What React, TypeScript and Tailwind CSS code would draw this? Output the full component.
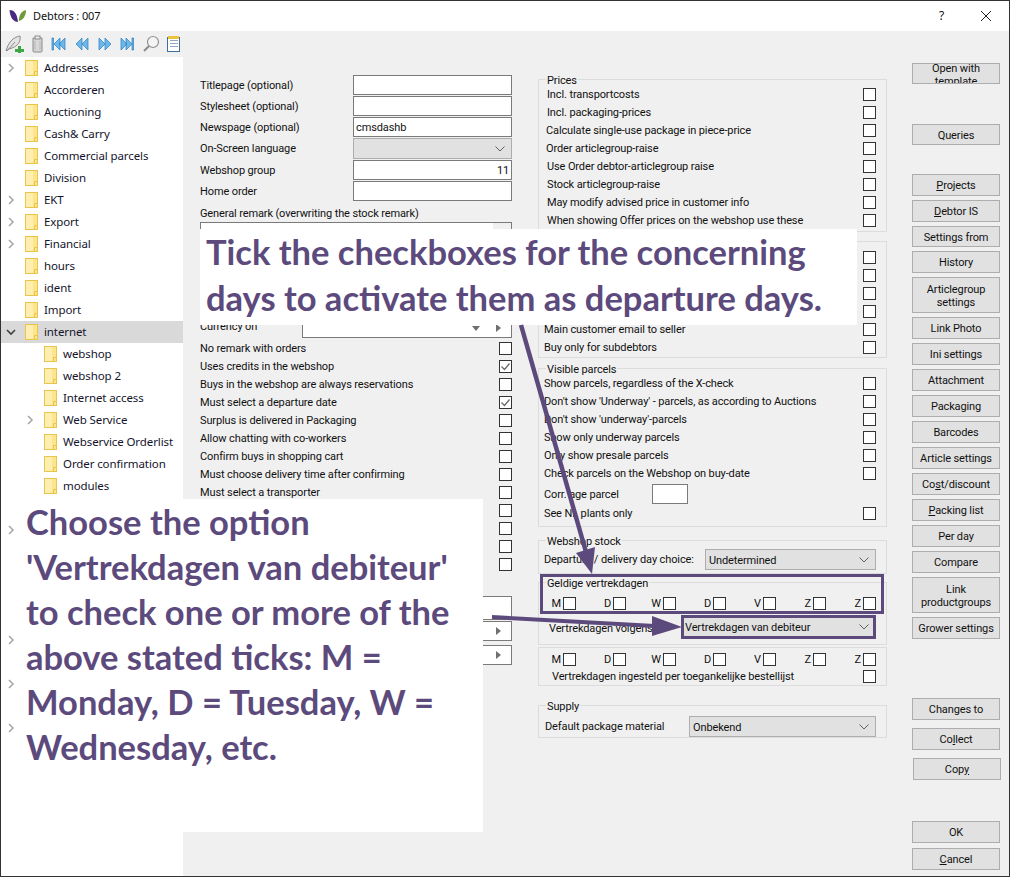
import type { ReactNode } from "react";

const UI = "font-['Roboto',sans-serif] text-[11px] leading-[18px] tracking-[-0.12px] text-[#111]";

const tree = [
  { name: "Addresses", more: true },
  { name: "Accorderen" },
  { name: "Auctioning" },
  { name: "Cash& Carry" },
  { name: "Commercial parcels" },
  { name: "Division" },
  { name: "EKT", more: true },
  { name: "Export", more: true },
  { name: "Financial", more: true },
  { name: "hours" },
  { name: "ident" },
  { name: "Import" },
  { name: "internet", open: true },
  { name: "webshop", child: true },
  { name: "webshop 2", child: true },
  { name: "Internet access", child: true },
  { name: "Web Service", child: true, more: true },
  { name: "Webservice Orderlist", child: true },
  { name: "Order confirmation", child: true },
  { name: "modules", child: true },
];

function Folder() {
  return (
    <svg width="13" height="16" viewBox="0 0 13 16" className="shrink-0">
      <rect x="0.5" y="0.5" width="12" height="15" fill="#fde58e" stroke="#eac54c" />
      <rect x="1" y="1" width="7" height="14" fill="#feeeb0" />
      <path d="M9.5 15.5v-4h3" fill="none" stroke="#eac54c" />
    </svg>
  );
}

function Chevron({ open }: { open?: boolean }) {
  if (open) {
    return (
      <svg width="10" height="10" viewBox="0 0 10 10">
        <path d="M1 3l4 4 4-4" fill="none" stroke="#404040" strokeWidth="1.6" />
      </svg>
    );
  }
  return (
    <svg width="10" height="10" viewBox="0 0 10 10">
      <path d="M3 1l4 4-4 4" fill="none" stroke="#a8a8a8" strokeWidth="1.6" />
    </svg>
  );
}

function Tree() {
  const extra = [1, 2, 3, 4, 5, 6, 7, 8, 9, 10, 11];
  return (
    <div className="w-[182px] bg-white shrink-0 overflow-hidden font-['Noto_Sans',sans-serif] text-[11.5px] tracking-[-0.1px] text-[#14142b]">
      {tree.map((t) => (
        <div key={t.name} className={`h-[22px] flex items-center ${t.open ? "bg-[#d9d9d9]" : ""} ${t.child ? "pl-[24px]" : "pl-[5px]"}`}>
          <div className="w-[19px] shrink-0">{(t.more || t.open) && <Chevron open={t.open} />}</div>
          <Folder />
          <span className="ml-[6px] whitespace-nowrap">{t.name}</span>
        </div>
      ))}
      {extra.map((i) => (
        <div key={i} className="h-[22px] flex items-center pl-[5px]">
          {(i === 2 || i === 7 || i === 9 || i === 11) && <Chevron />}
        </div>
      ))}
    </div>
  );
}

function Box({ checked }: { checked?: boolean }) {
  return (
    <span className="block w-[13px] h-[13px] border border-[#333] bg-white shrink-0">
      {checked && (
        <svg width="11" height="11" viewBox="0 0 11 11" className="block">
          <path d="M1.5 5.5l3 3 5-6" fill="none" stroke="#666" strokeWidth="1.2" />
        </svg>
      )}
    </span>
  );
}

function Field({ label, value, right }: { label: string; value?: string; right?: boolean }) {
  return (
    <div className="flex justify-between h-[21px]">
      <span className="leading-[22px]">{label}</span>
      <input
        readOnly
        value={value ?? ""}
        className={`w-[159px] h-[20px] border border-[#7a7a7a] bg-white px-[2px] text-[11px] outline-none ${right ? "text-right" : ""}`}
      />
    </div>
  );
}

function Select({ value, className }: { value?: string; className: string }) {
  return (
    <div className={`flex items-center justify-between border border-[#adadad] bg-[#e1e1e1] pl-[3px] pr-[5px] ${className}`}>
      <span className="whitespace-nowrap pt-[2px]">{value}</span>
      <svg width="12" height="8" viewBox="0 0 12 8">
        <path d="M1.5 1.5l4.5 4.5 4.5-4.5" fill="none" stroke="#606060" strokeWidth="1" />
      </svg>
    </div>
  );
}

function LeftRow({ label, checked }: { label?: string; checked?: boolean }) {
  return (
    <div className="h-[18px] flex items-start justify-between">
      <span className="mt-px">{label}</span>
      <span className="mt-[3px]">
        <Box checked={checked} />
      </span>
    </div>
  );
}

function Row({ label, pl = "pl-[5px]" }: { label?: string; pl?: string }) {
  return (
    <div className={`h-[18px] flex items-start justify-between pr-[10px] ${pl}`}>
      <span className="whitespace-nowrap mt-px">{label}</span>
      <span className="mt-[3px]">
        <Box />
      </span>
    </div>
  );
}

function Group({ legend, className, children }: { legend?: string; className: string; children: ReactNode }) {
  return (
    <div className={`relative border border-[#dcdcdc] ${className}`}>
      {legend && <span className="absolute left-[7px] -top-[8px] bg-[#f0f0f0] px-[1px] whitespace-nowrap">{legend}</span>}
      {children}
    </div>
  );
}

function Days() {
  return (
    <div className="flex justify-end pr-[10px] h-[18px]">
      {["M", "D", "W", "D", "V", "Z", "Z"].map((d, i) => (
        <div key={i} className={`flex justify-end gap-[2px] ${i === 0 ? "w-[37px]" : "w-[50px]"}`}>
          <span className="mt-px">{d}</span>
          <span className="mt-[3px]">
            <Box />
          </span>
        </div>
      ))}
    </div>
  );
}

function Btn({ children, className }: { children: ReactNode; className: string }) {
  return (
    <div className={`w-[88px] border border-[#adadad] bg-[#e1e1e1] flex items-center justify-center text-center leading-[13px] pt-px overflow-hidden shrink-0 ${className}`}>
      <span>{children}</span>
    </div>
  );
}

function Toolbar() {
  const nav = "#6cb8ea";
  return (
    <div className="h-[26px] bg-[#f0f0f0] flex items-center pl-[4px]">
      <svg width="180" height="18" viewBox="0 0 180 18" className="block">
        {/* feather */}
        <path d="M1 16C3 8 8 2 15 1c1 5-2 10-8 12l-3 1z" fill="#e4e4e4" stroke="#8c8c8c" />
        <path d="M2 16l8-9" stroke="#8c8c8c" fill="none" />
        <path d="M13 11h3v3h3v3h-3v1h-3v-1h-3v-3h3z" fill="#3fa648" />
        {/* trash */}
        <path d="M28 3h9v13a1 1 0 0 1-1 1h-7a1 1 0 0 1-1-1z" fill="#d8d8d8" stroke="#8a8a8a" />
        <rect x="30" y="1" width="5" height="3" fill="#ececec" stroke="#8a8a8a" />
        <path d="M30 6v9M35 6v9" stroke="#b5b5b5" />
        {/* first */}
        <path d="M47 3h1.500v12h-1.500zM55 3v12l-6-6zM60 3v12l-6-6z" fill={nav} stroke="#2b7dbb" strokeWidth="0.7" />
        {/* prev */}
        <path d="M77 3v12l-6-6zM83 3v12l-6-6z" fill={nav} stroke="#2b7dbb" strokeWidth="0.7" />
        {/* next */}
        <path d="M94 3v12l6-6zM100 3v12l6-6z" fill={nav} stroke="#2b7dbb" strokeWidth="0.7" />
        {/* last */}
        <path d="M116 3v12l6-6zM121 3v12l6-6zM127 3h1.500v12h-1.500z" fill={nav} stroke="#2b7dbb" strokeWidth="0.7" />
        {/* magnifier */}
        <circle cx="148" cy="7" r="5.500" fill="#f4f4f4" stroke="#909090" strokeWidth="1.2" />
        <path d="M144 11l-5 5" stroke="#8a8a8a" strokeWidth="2" />
        {/* notepad */}
        <rect x="162.500" y="2.500" width="12" height="14" fill="#fff" stroke="#3d6e9e" />
        <path d="M163 1h11v3h-11z" fill="#eec23b" />
        <path d="M165 5.500h8M165 8.500h8M165 11.500h8" stroke="#8fa8c0" />
      </svg>
    </div>
  );
}

export default function App() {
  return (
    <div className={`relative w-[1010px] h-[877px] border border-[#333] bg-[#f0f0f0] overflow-hidden flex flex-col ${UI}`}>
      {/* title bar */}
      <div className="h-[30px] bg-white flex items-center shrink-0">
        <svg width="18" height="14" viewBox="0 0 18 14" className="ml-[8px]">
          <path d="M0.500 1C5 1 8 4 9 13 4 13 1 8 0.500 1z" fill="#4a2a80" />
          <path d="M17 1C13 2 10 5 9.800 12 14 11 17 7 17 1z" fill="#6e9a3c" />
        </svg>
        <span className="ml-[6px] font-['Noto_Sans',sans-serif] text-[11px]">Debtors : 007</span>
        <span className="ml-auto mr-[36px] font-['Noto_Sans',sans-serif] text-[12px]">?</span>
        <svg width="12" height="12" viewBox="0 0 12 12" className="mr-[17px]">
          <path d="M1 1l10 10M11 1L1 11" stroke="#222" strokeWidth="1" />
        </svg>
      </div>
      <Toolbar />

      <div className="flex flex-1 min-h-0">
        <Tree />

        {/* left form */}
        <div className="w-[312px] ml-[17px] pt-[18px] shrink-0">
          <Field label="Titlepage (optional)" />
          <Field label="Stylesheet (optional)" />
          <Field label="Newspage (optional)" value="cmsdashb" />
          <div className="h-[22px] flex justify-between">
            <span className="leading-[22px]">On-Screen language</span>
            <Select className="w-[159px] h-[21px] bg-[#dcdcdc]" />
          </div>
          <Field label="Webshop group" value="11" right />
          <Field label="Home order" />
          <div className="h-[20px] leading-[24px]">General remark (overwriting the stock remark)</div>
          <div className="h-[90px] border border-[#7a7a7a] bg-white flex justify-end">
            <div className="w-[18px] bg-[#f0f0f0]" />
          </div>
          <div className="mt-[6px] h-[21px] flex justify-between">
            <span className="leading-[18px]">Currency on</span>
            <div className="w-[210px] h-[20px] border border-[#7a7a7a] bg-white flex items-center justify-end gap-[16px] pr-[10px]">
              <span className="w-0 h-0 border-x-[4px] border-x-transparent border-t-[5px] border-t-[#707070]" />
              <span className="w-0 h-0 border-y-[4px] border-y-transparent border-l-[5px] border-l-[#707070]" />
            </div>
          </div>
          <LeftRow label="No remark with orders" />
          <LeftRow label="Uses credits in the webshop" checked />
          <LeftRow label="Buys in the webshop are always reservations" />
          <LeftRow label="Must select a departure date" checked />
          <LeftRow label="Surplus is delivered in Packaging" />
          <LeftRow label="Allow chatting with co-workers" />
          <LeftRow label="Confirm buys in shopping cart" />
          <LeftRow label="Must choose delivery time after confirming" />
          <LeftRow label="Must select a transporter" />
          <LeftRow />
          <LeftRow />
          <LeftRow />
          <LeftRow />
          <div className="mt-[23px] ml-auto w-[210px] h-[24px] border border-[#7a7a7a] bg-white" />
          <div className="mt-[1px] ml-auto w-[210px] h-[20px] border border-[#7a7a7a] bg-white flex items-center justify-end pr-[10px]">
            <span className="w-0 h-0 border-y-[4px] border-y-transparent border-l-[5px] border-l-[#707070]" />
          </div>
          <div className="mt-[4px] ml-auto w-[210px] h-[20px] border border-[#7a7a7a] bg-white flex items-center justify-end pr-[10px]">
            <span className="w-0 h-0 border-y-[4px] border-y-transparent border-l-[5px] border-l-[#707070]" />
          </div>
        </div>

        {/* option groups */}
        <div className="w-[349px] ml-[26px] pt-[22px] shrink-0">
          <Group legend="Prices" className="h-[153px] pt-[5px]">
            <Row label="Incl. transportcosts" pl="pl-[8px]" />
            <Row label="Incl. packaging-prices" pl="pl-[8px]" />
            <Row label="Calculate single-use package in piece-price" pl="pl-[7px]" />
            <Row label="Order articlegroup-raise" pl="pl-[7px]" />
            <Row label="Use Order debtor-articlegroup raise" pl="pl-[8px]" />
            <Row label="Stock articlegroup-raise" pl="pl-[8px]" />
            <Row label="May modify advised price in customer info" pl="pl-[8px]" />
            <Row label="When showing Offer prices on the webshop use these" pl="pl-[8px]" />
          </Group>
          <Group className="mt-[9px] h-[117px] pt-[6px]">
            <Row />
            <Row />
            <Row />
            <Row />
            <Row label="Main customer email to seller" />
            <Row label="Buy only for subdebtors" />
          </Group>
          <Group legend="Visible parcels" className="mt-[10px] h-[159px] pt-[5px]">
            <Row label="Show parcels, regardless of the X-check" />
            <Row label="Don't show 'Underway' - parcels, as according to Auctions" />
            <Row label="Don't show 'underway'-parcels" />
            <Row label="Show only underway parcels" />
            <Row label="Only show presale parcels" />
            <Row label="Check parcels on the Webshop on buy-date" />
            <div className="h-[22px] flex pl-[5px] leading-[26px]">
              <span className="w-[108px] whitespace-nowrap">Corr. age parcel</span>
              <div className="mt-[2px] w-[36px] h-[20px] border border-[#7a7a7a] bg-white" />
            </div>
            <Row label="See NL plants only" />
          </Group>
          <Group legend="Webshop stock" className="mt-[13px] h-[34px] pt-[8px] pl-[5px] pr-[10px]">
            <div className="flex justify-between">
              <span className="leading-[22px] whitespace-nowrap">Departure / delivery day choice:</span>
              <Select value="Undetermined" className="w-[171px] h-[21px]" />
            </div>
          </Group>
          <Group legend="Geldige vertrekdagen" className="mt-[8px] h-[63px] pt-[11px]">
            <Days />
            <div className="mt-[3px] flex justify-between pl-[10px] pr-[10px]">
              <span className="leading-[27px] whitespace-nowrap">Vertrekdagen volgens</span>
              <Select value="Vertrekdagen van debiteur" className="w-[195px] h-[23px]" />
            </div>
          </Group>
          <Group className="mt-[2px] h-[39px] pt-[2px]">
            <Days />
            <div className="-mt-[1px]">
              <Row label="Vertrekdagen ingesteld per toegankelijke bestellijst" pl="pl-[13px]" />
            </div>
          </Group>
          <Group legend="Supply" className="mt-[19px] h-[33px] pt-[10px] pl-[6px] pr-[10px]">
            <div className="flex justify-between">
              <span className="leading-[22px] whitespace-nowrap">Default package material</span>
              <Select value="Onbekend" className="w-[187px] h-[21px]" />
            </div>
          </Group>
        </div>

        {/* buttons */}
        <div className="w-[90px] ml-[25px] flex flex-col shrink-0">
          <Btn className="mt-[6px] h-[21px]"><span className="block mt-[2px]">Open with<br />template</span></Btn>
          <Btn className="mt-[40px] h-[21px]">Queries</Btn>
          <Btn className="mt-[29px] h-[22px]"><u>P</u>rojects</Btn>
          <Btn className="mt-[4px] h-[22px]"><u>D</u>ebtor IS</Btn>
          <Btn className="mt-[4px] h-[21px]">Settings from</Btn>
          <Btn className="mt-[4px] h-[22px]">History</Btn>
          <Btn className="mt-[4px] h-[36px]">Articlegroup<br />settings</Btn>
          <Btn className="mt-[4px] h-[22px]">Link Photo</Btn>
          <Btn className="mt-[4px] h-[22px]">Ini settings</Btn>
          <Btn className="mt-[4px] h-[22px]">Attachment</Btn>
          <Btn className="mt-[4px] h-[22px]">Packaging</Btn>
          <Btn className="mt-[4px] h-[22px]">Barcodes</Btn>
          <Btn className="mt-[4px] h-[22px]">Article settings</Btn>
          <Btn className="mt-[4px] h-[22px]">Co<u>s</u>t/discount</Btn>
          <Btn className="mt-[4px] h-[22px]"><u>P</u>acking list</Btn>
          <Btn className="mt-[4px] h-[22px]">Per day</Btn>
          <Btn className="mt-[4px] h-[22px]">Compare</Btn>
          <Btn className="mt-[4px] h-[36px]">Link<br />productgroups</Btn>
          <Btn className="mt-[4px] h-[22px]">Grower settings</Btn>
          <Btn className="mt-[59px] h-[22px]">Changes to</Btn>
          <Btn className="mt-[8px] h-[22px]">Co<u>l</u>lect</Btn>
          <Btn className="mt-[8px] h-[22px] ml-[1px]">Cop<u>y</u></Btn>
          <Btn className="mt-[41px] h-[22px]">OK</Btn>
          <Btn className="mt-[5px] h-[22px]"><u>C</u>ancel</Btn>
        </div>
      </div>

      {/* annotations laid over the dialog */}
      <div className="absolute -left-px -top-px w-[1010px] h-[877px] pointer-events-none font-['Lato',sans-serif] font-bold tracking-normal text-[#5c4a7d]">
        <div className="absolute left-[200px] top-[229px] w-[657px] h-[96px] bg-white pl-[6px] text-[34.5px] leading-[46px] whitespace-nowrap">
          Tick the checkboxes for the concerning
          <br />
          days to activate them as departure days.
        </div>
        <div className="absolute left-[16px] top-[499px] w-[467px] h-[333px] bg-white pl-[10px] text-[34.5px] leading-[45px] whitespace-nowrap">
          Choose the option
          <br />
          'Vertrekdagen van debiteur'
          <br />
          to check one or more of the
          <br />
          above stated ticks: M =
          <br />
          Monday, D = Tuesday, W =
          <br />
          Wednesday, etc.
        </div>
        <div className="absolute left-[540px] top-[574px] w-[344px] h-[40px] border-[3px] border-[#5c4a7d]" />
        <div className="absolute left-[681px] top-[615px] w-[195px] h-[24px] border-[3px] border-[#5c4a7d]" />
        <svg width="1010" height="877" className="absolute left-0 top-0">
          <path d="M521 325L586 552" stroke="#5c4a7d" strokeWidth="4.500" />
          <path d="M592 574L595 547 576 553z" fill="#5c4a7d" />
          <path d="M492 617L655 626" stroke="#5c4a7d" strokeWidth="4" />
          <path d="M682 627L652 616 652 636z" fill="#5c4a7d" />
        </svg>
      </div>
    </div>
  );
}
